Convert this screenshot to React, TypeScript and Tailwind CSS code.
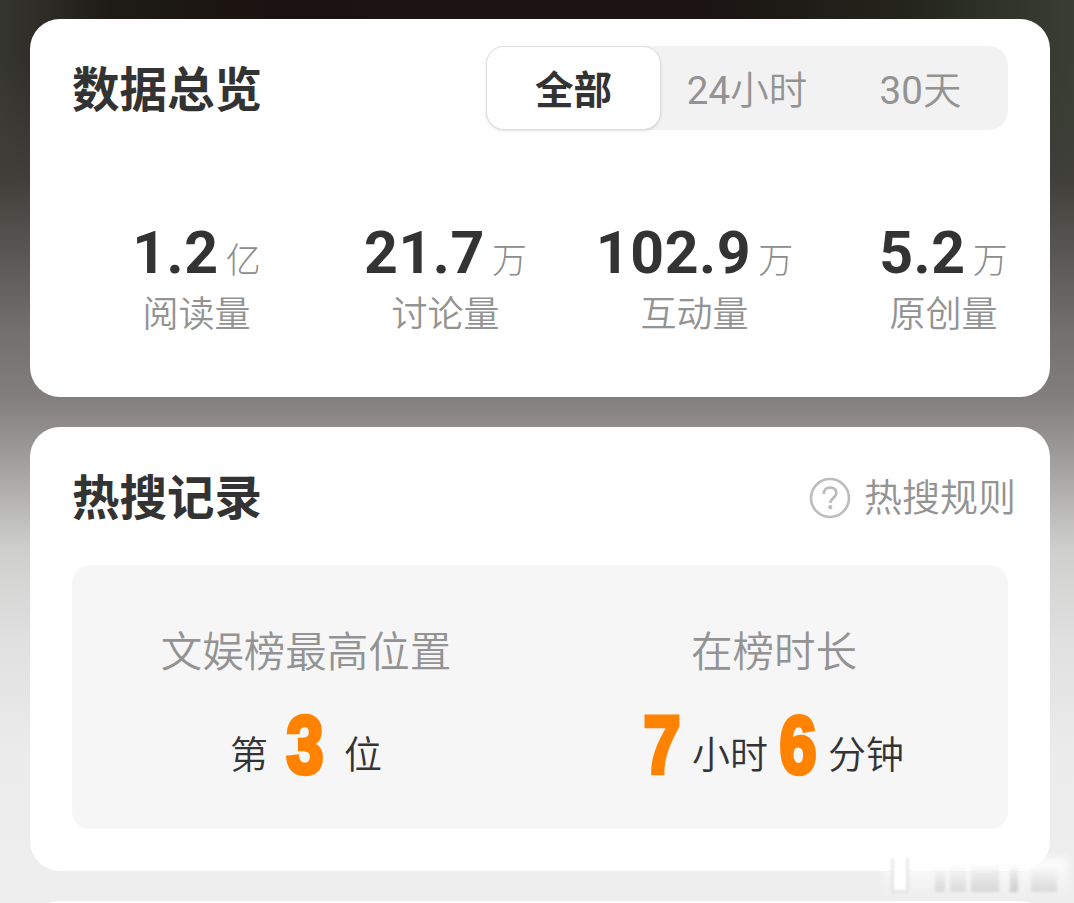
import { ReactNode } from "react";

interface Stat {
  value: string;
  unit: string;
  label: string;
}

const stats: Stat[] = [
  { value: "1.2", unit: "亿", label: "阅读量" },
  { value: "21.7", unit: "万", label: "讨论量" },
  { value: "102.9", unit: "万", label: "互动量" },
  { value: "5.2", unit: "万", label: "原创量" },
];

const SectionTitle = ({ children }: { children: ReactNode }) => (
  <h2 className="text-[47.5px] leading-[56px] font-bold text-[#333333]">
    {children}
  </h2>
);

const StatItem = ({ value, unit, label }: Stat) => (
  <div className="w-[249px] shrink-0 flex flex-col items-center">
    <div className="flex items-start whitespace-nowrap">
      <span className="font-[Roboto] text-[59px] leading-[64px] font-bold tracking-[0.6px]">
        {value}
      </span>
      <span className="ml-[7px] pt-[15px] text-[35px] leading-[44px] font-light text-[#8c8c8c]">
        {unit}
      </span>
    </div>
    <span className="mt-[4px] text-[36px] leading-[44px] font-[350] text-[#939393]">
      {label}
    </span>
  </div>
);

const HotNumber = ({ value }: { value: number }) => (
  <svg width="40" height="64" viewBox="0 0 40 64" className="overflow-visible">
    <text
      x="1.5"
      y="61.5"
      textLength="37"
      lengthAdjust="spacingAndGlyphs"
      className="fill-[#ff8200] stroke-[#ff8200] stroke-[4.5px] font-['Liberation_Sans'] text-[81px] font-bold"
    >
      {value}
    </text>
  </svg>
);

const Overview = () => (
  <section className="h-[378px] rounded-[30px] bg-white overflow-hidden">
    <div className="flex justify-between pl-[42px] pr-[42px] pt-[27px]">
      <div className="pt-[13px]">
        <SectionTitle>数据总览</SectionTitle>
      </div>
      <div className="flex w-[522px] h-[84px] rounded-[20px] bg-[#f2f2f2] font-[Roboto,'Noto_Sans_CJK_SC',sans-serif] text-[38.5px] text-[#939393]">
        <button className="w-[175px] pt-1.5 rounded-[18px] border border-[#dedede] bg-white font-bold text-[#333333] shadow-sm">
          全部
        </button>
        <button className="w-[172px] pt-1.5 font-[350]">
          <span className="font-normal">24</span>小时
        </button>
        <button className="w-[175px] pt-1.5 font-[350]">
          <span className="font-normal">30</span>天
        </button>
      </div>
    </div>
    <div className="flex pt-[91px] pl-[42px] text-[#333333]">
      {stats.map((stat) => (
        <StatItem key={stat.label} {...stat} />
      ))}
    </div>
  </section>
);

const HotRecords = () => (
  <section className="mt-[30px] h-[444px] rounded-[30px] bg-white">
    <div className="flex justify-between pl-[42px] pr-[34px] pt-[40px]">
      <SectionTitle>热搜记录</SectionTitle>
      <div className="flex items-center gap-[13px] text-[#939393]">
        <svg width="42" height="42" viewBox="0 0 42 42" className="mt-[6px]">
          <circle
            cx="21"
            cy="21"
            r="19"
            fill="none"
            stroke="#bcbcbc"
            strokeWidth="2.6"
          />
          <path
            d="M14.8 17c.1-4.1 2.4-6.4 6.3-6.4 3.8 0 6.2 2.1 6.2 5.5 0 4.9-6 5.2-6 9.9"
            fill="none"
            stroke="#bcbcbc"
            strokeWidth="2.8"
          />
          <circle cx="21.3" cy="30.2" r="2.1" fill="#bcbcbc" />
        </svg>
        <span className="text-[38px] leading-[56px] font-[350]">热搜规则</span>
      </div>
    </div>
    <div className="flex mt-[42px] mx-[42px] h-[264px] rounded-[18px] bg-[#f6f6f6] pt-[57px]">
      <div className="w-1/2 flex flex-col items-center">
        <span className="text-[41.5px] leading-[54px] font-[350] text-[#939393]">
          文娱榜最高位置
        </span>
        <div className="mt-[35px] flex items-end text-[38px] leading-[46px] font-[350] text-[#333333]">
          <span>第</span>
          <span className="ml-[17px] mr-[19px]">
            <HotNumber value={3} />
          </span>
          <span>位</span>
        </div>
      </div>
      <div className="w-1/2 flex flex-col items-center">
        <span className="text-[41.5px] leading-[54px] font-[350] text-[#939393]">
          在榜时长
        </span>
        <div className="mt-[35px] -ml-[2px] flex items-end text-[38px] leading-[46px] font-[350] text-[#333333]">
          <HotNumber value={7} />
          <span className="mx-[10px]">小时</span>
          <HotNumber value={6} />
          <span className="ml-[10px]">分钟</span>
        </div>
      </div>
    </div>
  </section>
);

// Smudged remains of the watermark in the bottom corner
const Watermark = () => (
  <div className="absolute left-[884px] top-[858px] h-[38px] w-[184px]">
    <div className="absolute inset-0 bg-linear-to-b from-white/90 to-[#f0f0f0]/40 blur-[4px]" />
    <div className="relative flex h-[34px] items-end gap-[5px] pl-[8px] blur-[1.5px]">
      <div className="h-[34px] w-[16px] border-x border-b border-[#c4c4c4] bg-white" />
      <div className="ml-[22px] h-[24px] w-[10px] bg-linear-to-b from-transparent to-[#d8d8d8]" />
      <div className="h-[26px] w-[16px] bg-linear-to-b from-transparent to-[#dcdcdc]" />
      <div className="h-[28px] w-[28px] bg-linear-to-b from-transparent to-[#d6d6d6]" />
      <div className="ml-[6px] h-[28px] w-[8px] bg-linear-to-b from-transparent to-[#cccccc]" />
      <div className="ml-[8px] h-[24px] w-[26px] bg-linear-to-b from-transparent to-[#dadada]" />
    </div>
  </div>
);

const App = () => (
  <div className="relative h-[903px] w-[1074px] overflow-hidden bg-[linear-gradient(180deg,transparent_0px,#3b3b3500_60px,#403f3a_180px,#55534f_240px,#726f6d_330px,#827f7e_400px,#aaa9a8_480px,#cfcfce_550px,#e0e0e0_640px,#ececec_760px,#eeeeee_903px),linear-gradient(90deg,#363631_0px,#1e1b15_110px,#1a1311_270px,#1a1412_700px,#23241b_900px,#383f32_1074px)] px-[30px] pr-[24px] pt-[19px] font-['Noto_Sans_CJK_SC',sans-serif]">
    <Overview />
    <HotRecords />
    <section className="mt-[30px] h-[60px] rounded-[30px] bg-white" />
    <Watermark />
  </div>
);

export default App;
